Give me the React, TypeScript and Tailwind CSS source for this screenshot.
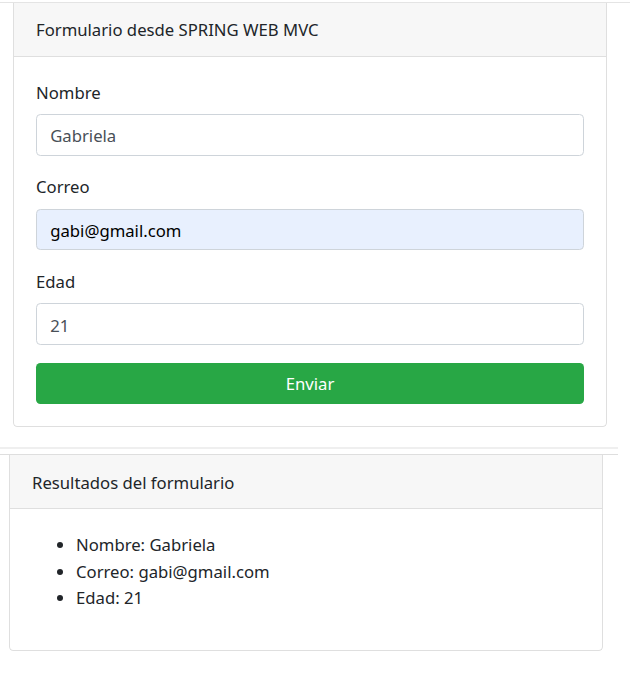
import React from 'react';

const font = { fontFamily: '"Segoe UI", "Noto Sans", "Open Sans", sans-serif' };

function Field({ label, value, autofill }: { label: string; value: string; autofill?: boolean }) {
  return (
    <div className="mb-[17.6px]">
      <label className="mb-[8.8px] block pt-px leading-[26.4px]">{label}</label>
      <input
        readOnly
        value={value}
        className={`-mt-px block h-[41.8px] w-full rounded-[4.4px] border border-[#ced4da] px-[13.2px] pt-[2px] text-[16.7px] leading-[26.4px] outline-none ${
          autofill ? 'bg-[#e8f0fe] text-black' : 'bg-white text-[#495057]'
        }`}
      />
    </div>
  );
}

export default function App() {
  return (
    <div className="min-h-[684px] w-[630px] bg-white text-[16.7px] leading-[26.4px] text-[#212529]" style={font}>
      <div className="h-[2px]" />
      <div className="h-px w-full bg-[#e4e4e4]" />

      <div className="ml-[13px] w-[594px] rounded-b-[4.4px] border border-t-0 border-[#dfdfdf]">
        <div className="border-b border-[#dfdfdf] bg-[#f7f7f7] px-[22px] pb-[12.2px] pt-[14.2px]">
          Formulario desde SPRING WEB MVC
        </div>
        <div className="p-[22px]">
          <Field label="Nombre" value="Gabriela" />
          <Field label="Correo" value="gabi@gmail.com" autofill />
          <Field label="Edad" value="21" />
          <button className="block h-[41.8px] w-full rounded-[4.4px] bg-[#28a745] pt-px text-white">Enviar</button>
        </div>
      </div>

      <div className="mt-[20px] h-[2px] w-[618px] bg-[#efefef]" />
      <div className="mt-[5px] h-px w-[618px] bg-[#dedede]" />

      <div className="ml-[9px] w-[594px] rounded-b-[4.4px] border border-t-0 border-[#dfdfdf]">
        <div className="border-b border-[#dfdfdf] bg-[#f7f7f7] px-[22px] pb-[12.2px] pt-[14.2px]">
          Resultados del formulario
        </div>
        <div className="px-[22px] pb-[21px] pt-[23px]">
          <ul className="mb-[17.6px] list-disc pl-[44px]">
            <li>Nombre: Gabriela</li>
            <li>Correo: gabi@gmail.com</li>
            <li>Edad: 21</li>
          </ul>
        </div>
      </div>
    </div>
  );
}
